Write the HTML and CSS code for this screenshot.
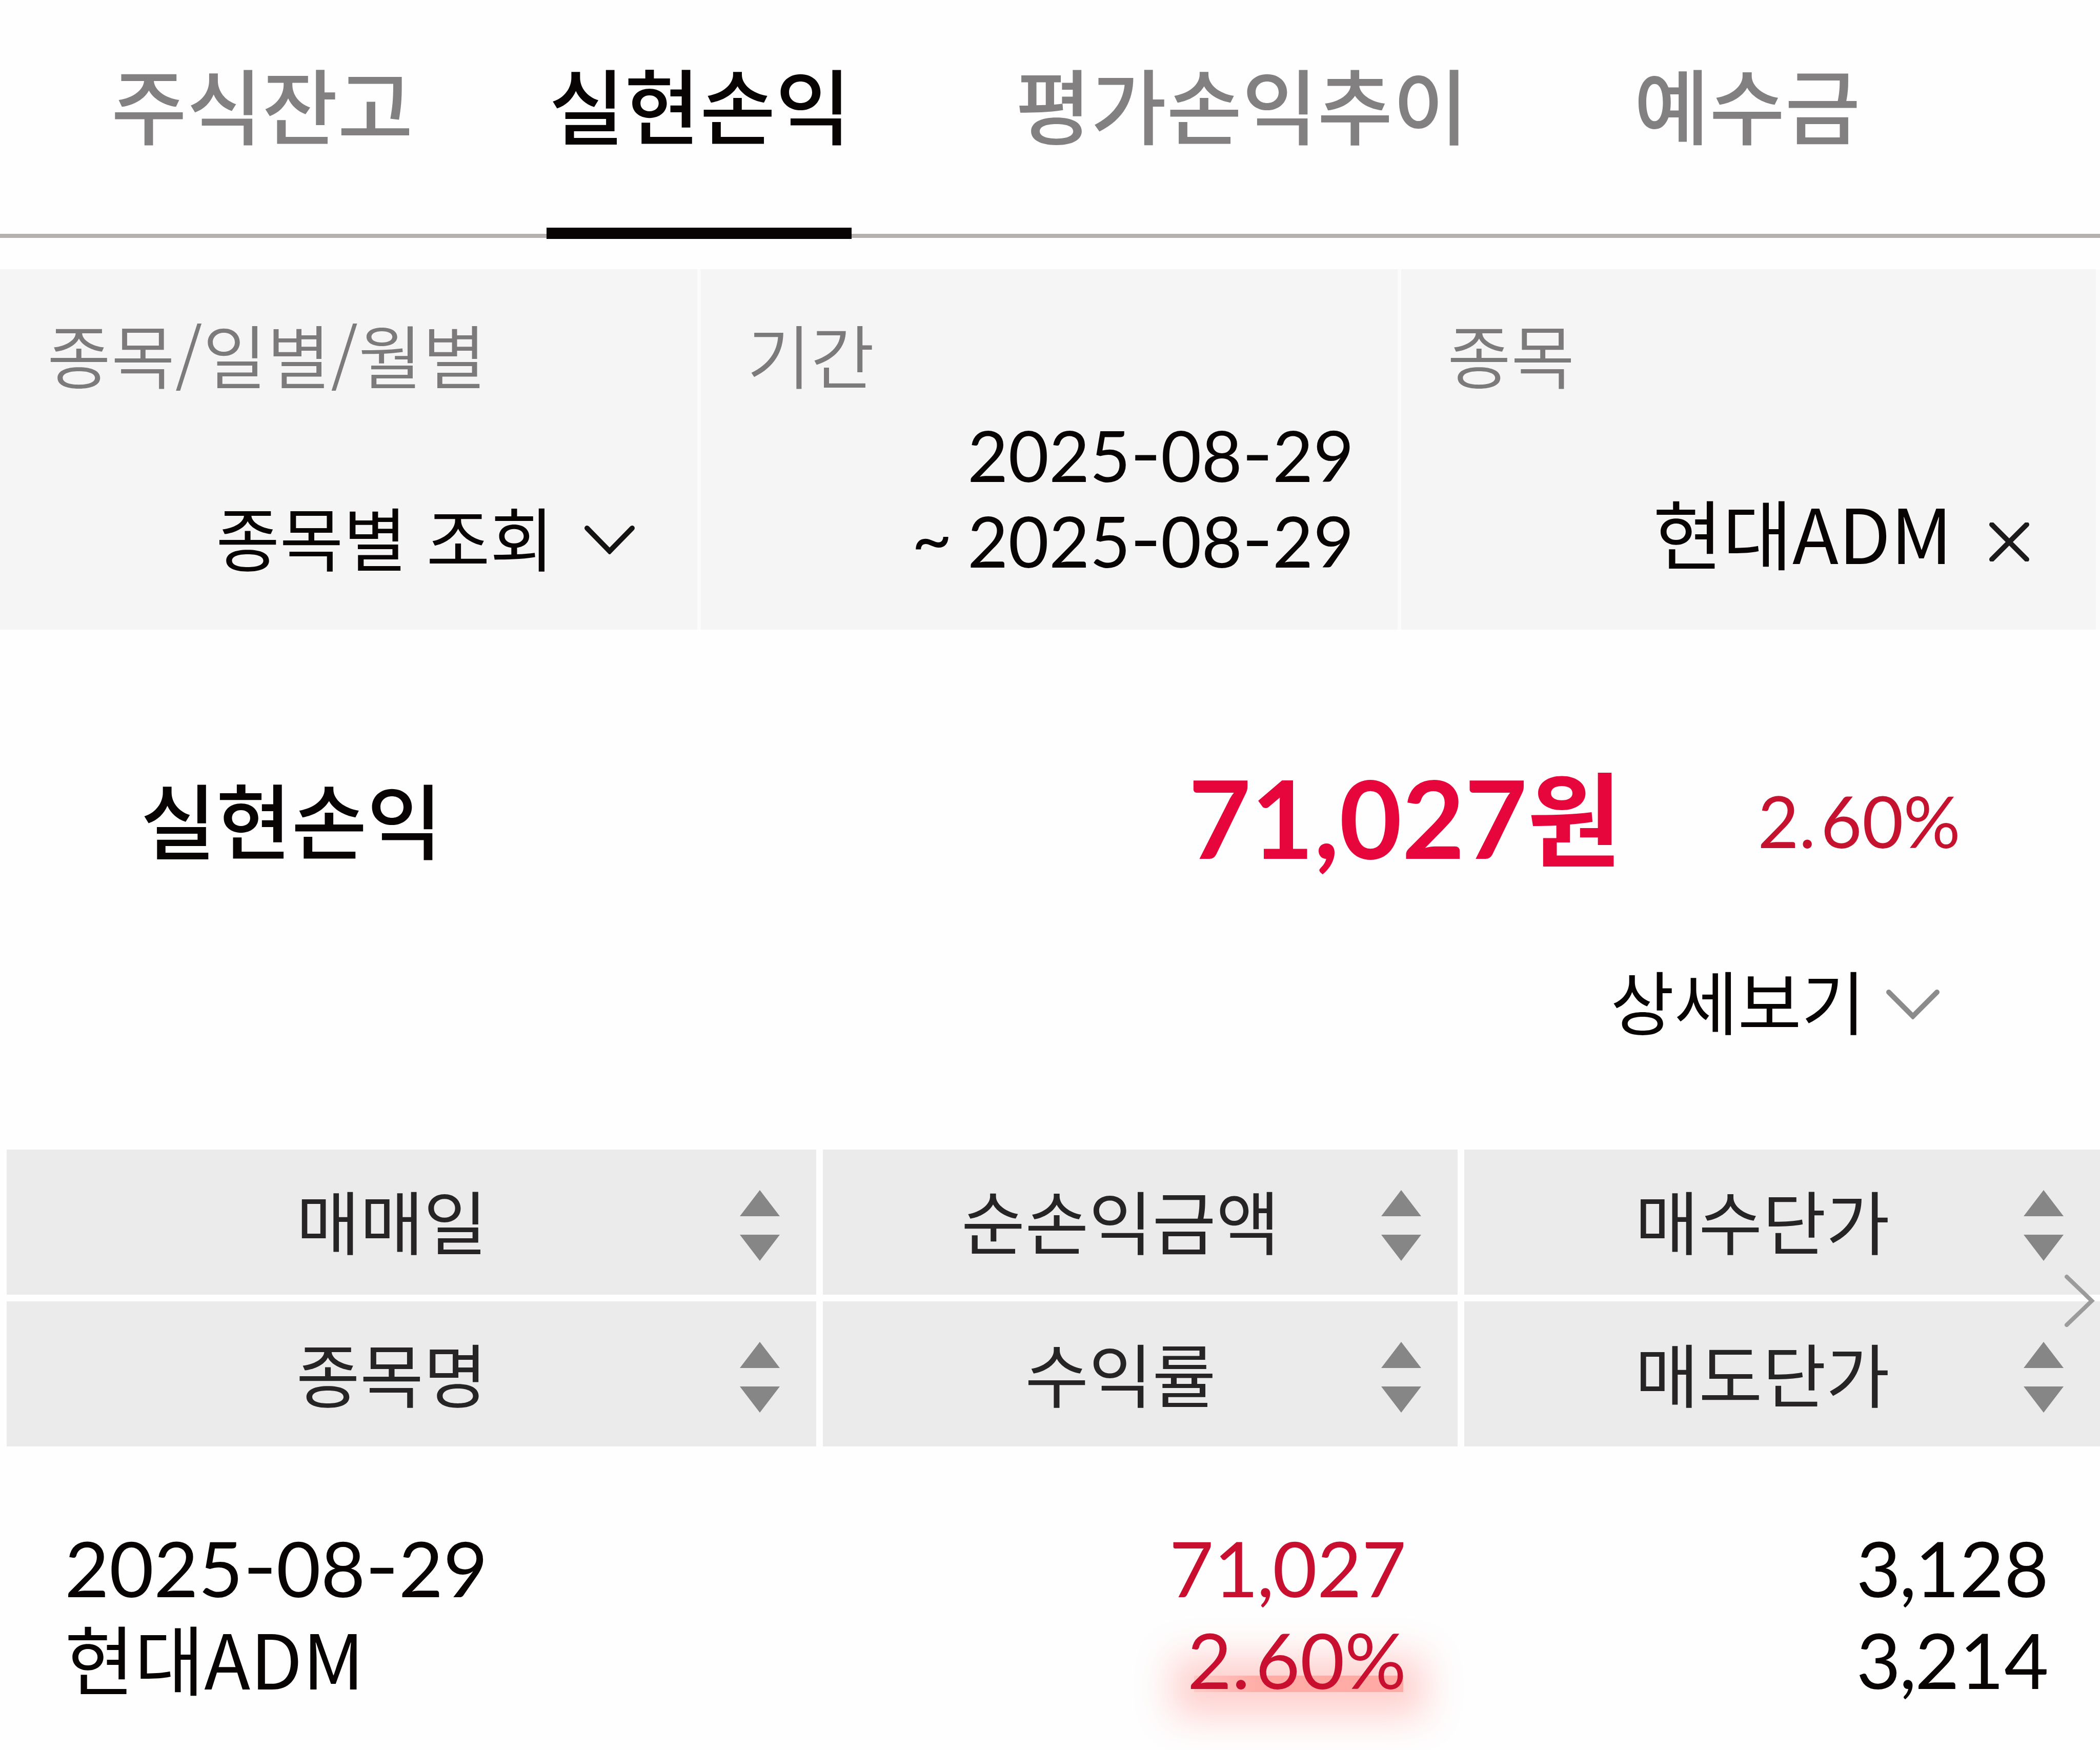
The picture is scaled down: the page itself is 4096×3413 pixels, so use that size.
FILE: index.html
```html
<!DOCTYPE html>
<html lang="ko">

<head>
    <meta charset="utf-8">
    <title>실현손익</title>
    <link rel="stylesheet" href="styles.css">
</head>

<body>
    <div class="tabs">
        <div class="tab first">주식잔고</div>
        <div class="tab active">실현손익</div>
        <div class="tab">평가손익추이</div>
        <div class="tab">예수금</div>
    </div>

    <div class="filters">
        <div class="filter">
            <div class="label wide">종목/일별/월별</div>
            <div class="value kind">
                <span>종목별 조회</span>
                <svg class="chevron" width="98" height="56" viewBox="0 0 98 56">
                    <path d="M5 5 L49 50 L93 5" />
                </svg>
            </div>
        </div>
        <div class="filter">
            <div class="label">기간</div>
            <div class="value period">2025<span class="dash">-</span>08<span class="dash">-</span>29<br><span class="tilde">~</span> 2025<span class="dash">-</span>08<span class="dash">-</span>29</div>
        </div>
        <div class="filter">
            <div class="label">종목</div>
            <div class="value stock">
                <span>현대ADM</span>
                <svg class="close" width="78" height="76" viewBox="0 0 78 76">
                    <path d="M5 4 L73 72 M73 4 L5 72" />
                </svg>
            </div>
        </div>
    </div>

    <div class="summary">
        <div class="total">
            <div class="title">실현손익</div>
            <div class="amount">71,027<span class="won">원</span></div>
            <div class="rate">2<span class="dot">.</span>60%</div>
        </div>
        <div class="detail">
            <span>상세보기</span>
            <svg class="chevron gray" width="104" height="58" viewBox="0 0 104 58">
                <path d="M5 5 L52 52 L99 5" />
            </svg>
        </div>
    </div>

    <div class="table">
        <div class="head">
            <div class="th"><span>매매일</span><i class="sort"></i></div>
            <div class="th"><span>순손익금액</span><i class="sort"></i></div>
            <div class="th"><span>매수단가</span><i class="sort"></i></div>
            <div class="th second"><span>종목명</span><i class="sort"></i></div>
            <div class="th second"><span>수익률</span><i class="sort"></i></div>
            <div class="th second"><span>매도단가</span><i class="sort"></i></div>
        </div>
        <svg class="next" width="60" height="104" viewBox="0 0 60 104">
            <path d="M5 5 L54 52 L5 99" />
        </svg>
        <div class="row">
            <div class="td">
                <div>2025<span class="dash">-</span>08<span class="dash">-</span>29</div>
                <div class="name">현대ADM</div>
            </div>
            <div class="td num red">
                <div>71<span class="comma">,</span>027</div>
                <div class="marked">2<span class="dot">.</span>60%</div>
            </div>
            <div class="td num">
                <div>3<span class="comma">,</span>128</div>
                <div>3<span class="comma">,</span>214</div>
            </div>
        </div>
    </div>
</body>

</html>
```
FILE: styles.css
```css
* {
    box-sizing: border-box;
}

body {
    margin: 0;
    width: 4096px;
    height: 3413px;
    overflow: hidden;
    background-color: #fefefe;
    color: #080404;
    font-family: "Noto Sans CJK KR", sans-serif;
    font-size: 135px;
    line-height: 135px;
    white-space: nowrap;
}

svg {
    display: block;
    flex: none;
    fill: none;
    stroke-linecap: round;
}

/* punctuation spacing inside numbers */
.dash {
    display: inline-block;
    margin: 0 0.03em;
    transform: translateY(-0.045em) scaleX(1.2);
}

.comma {
    margin: 0 -0.022em;
}

.dot {
    margin: 0 0.07em 0 0;
}

.tilde {
    position: relative;
    top: -0.05em;
    margin-right: -0.04em;
}

/* tabs */
.tabs {
    display: flex;
    gap: 320px;
    height: 466px;
    padding-left: 217px;
    background: linear-gradient(#b4b1b0, #b4b1b0) 0 456px / 100% 8px no-repeat;
}

.tab {
    height: 466px;
    padding-top: 120px;
    font-size: 160px;
    line-height: 160px;
    font-weight: 500;
    color: #828081;
}

.tab.first {
    margin-right: -60px;
}

.tab:last-child {
    margin-left: 3px;
}

.tab.active {
    width: 595px;
    padding-left: 5px;
    color: #080404;
    border-bottom: 22px solid #080404;
}

/* filters */
.filters {
    display: grid;
    grid-template-columns: 1360px 1359px 1355px;
    gap: 7px;
    height: 703px;
    margin-top: 59px;
    background-color: #fbfbfb;
}

.filter {
    display: flex;
    flex-direction: column;
    justify-content: space-between;
    padding: 97px 0 0 90px;
    background-color: #f5f5f6;
}

.label {
    color: #7c7a7b;
    font-weight: 350;
}

.label.wide {
    padding-left: 2px;
    letter-spacing: 0.7px;
}

.value {
    display: flex;
    justify-content: flex-end;
    align-items: center;
}

.kind {
    gap: 60px;
    padding: 0 122px 115px 0;
}

.period {
    display: block;
    text-align: right;
    padding: 0 85px 90px 0;
    font-family: Lato, "Noto Sans CJK KR", sans-serif;
    font-size: 137px;
    line-height: 167px;
}

.stock {
    gap: 72px;
    padding: 0 130px 118px 0;
    font-size: 148px;
    line-height: 148px;
}

.chevron {
    stroke: #151212;
    stroke-width: 10px;
    margin-top: 14px;
}

.close {
    stroke: #1c1a1a;
    stroke-width: 10px;
    margin-top: 42px;
}

/* summary */
.summary {
    height: 1014px;
    padding: 256px 272px 0 274px;
}

.total {
    display: flex;
    align-items: center;
    height: 220px;
}

.title {
    font-size: 160px;
    font-weight: 500;
    margin-right: auto;
}

.amount {
    font-family: Lato, "Noto Sans CJK KR", sans-serif;
    font-size: 211px;
    line-height: 220px;
    font-weight: 700;
    color: #e7063c;
}

.won {
    font-family: "Noto Sans CJK KR", sans-serif;
    font-size: 200px;
    line-height: 200px;
}

.rate {
    margin: 13px 0 0 265px;
    font-family: Lato, sans-serif;
    font-size: 139px;
    color: #c5122f;
}

.detail {
    display: flex;
    justify-content: flex-end;
    align-items: center;
    gap: 41px;
    margin: 178px 41px 0 0;
}

.chevron.gray {
    stroke: #8b8b8b;
    margin-top: 18px;
}

/* table */
.table {
    position: relative;
}

.head {
    display: grid;
    grid-template-columns: 1579px 1238px 1240px;
    grid-template-rows: 283px 283px;
    gap: 13px;
    padding-left: 13px;
}

.th {
    display: flex;
    align-items: center;
    padding: 0 71px 0 0;
    background-color: #ebebeb;
    color: #262424;
}

.th span {
    flex: 1;
    margin: -11px 6px 0 0;
    text-align: center;
}

.th.second span {
    margin-top: -6px;
}

/* up and down triangles */
.sort {
    width: 78px;
    height: 138px;
    margin: 13px 0 0 -78px;
    background-color: #868686;
    clip-path: polygon(50% 0, 100% 37%, 0 37%, 50% 0, 50% 100%, 0 63%, 100% 63%, 50% 100%);
}

.next {
    position: absolute;
    top: 243px;
    right: 10px;
    stroke: #9b9b9c;
    stroke-width: 8px;
}

.row {
    display: grid;
    grid-template-columns: 1579px 1238px 1240px;
    gap: 13px;
    padding: 147px 0 0 13px;
    font-family: Lato, sans-serif;
    font-size: 150px;
    line-height: 179px;
}

.td {
    padding: 0 100px 0 113px;
}

.num {
    text-align: right;
}

.red {
    color: #c80f30;
}

.name {
    font-family: "Noto Sans CJK KR", sans-serif;
    font-size: 148px;
    line-height: 168px;
}

.marked {
    position: relative;
}

/* highlighter stroke behind the rate */
.marked::before {
    content: "";
    position: absolute;
    z-index: -1;
    right: 6px;
    bottom: 26px;
    width: 408px;
    height: 32px;
    background: linear-gradient(to right, #ffc9c5, #ffada7 30%, #ffaaa4);
    box-shadow: 0 5px 72px 42px rgba(255, 70, 60, 0.25);
}
```
